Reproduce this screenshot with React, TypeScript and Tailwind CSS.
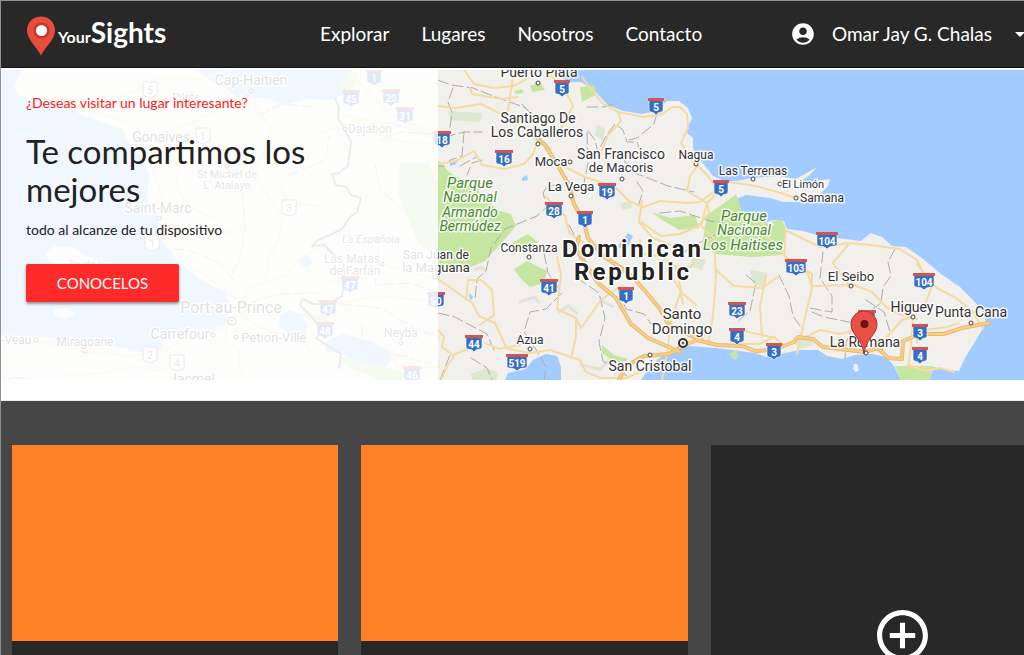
import React from "react";
import { MdAccountCircle, MdAddCircleOutline, MdArrowDropDown } from "react-icons/md";

type Label = [text: string, x: number, y: number, size: number, kind?: "park" | "soft"];

const labels: Label[] = [
  ["Cap-Haitien", 251, 85, 14],
  ["Pilate", 186, 101, 11, "soft"],
  ["Gonaives", 161, 142, 14],
  ["St Michel de", 227, 178, 11, "soft"],
  ["L' Atalaye", 227, 189, 11, "soft"],
  ["Saint-Marc", 158, 213, 14],
  ["Île de la", 88, 268, 11, "soft"],
  ["Port-au-Prince", 231, 313, 16],
  ["Carrefour", 180, 339, 14],
  ["Petion-Ville", 274, 342, 13],
  ["Miragoane", 85, 346, 12],
  ["n-Veau", 13, 344, 12],
  ["Jacmel", 192, 384, 14],
  ["Dajabon", 370, 133, 12, "soft"],
  ["La Española", 371, 243, 11, "soft"],
  ["Las Matas", 352, 263, 12, "soft"],
  ["de Farfán", 355, 275, 12, "soft"],
  ["San Juan de", 436, 259, 12],
  ["la Maguana", 436, 272, 13],
  ["Neyba", 401, 337, 12, "soft"],
  ["Puerto Plata", 539, 77, 14],
  ["Santiago De", 538, 123, 14],
  ["Los Caballeros", 537, 137, 14],
  ["Moca", 551, 166, 13],
  ["San Francisco", 621, 159, 14],
  ["de Macoris", 621, 172, 13],
  ["La Vega", 571, 191, 13],
  ["Nagua", 696, 159, 12],
  ["Las Terrenas", 753, 175, 12],
  ["El Limón", 803, 188, 11],
  ["Samana", 822, 202, 12],
  ["Parque", 470, 188, 15, "park"],
  ["Nacional", 470, 202, 14, "park"],
  ["Armando", 470, 217, 14, "park"],
  ["Bermúdez", 470, 231, 14, "park"],
  ["Parque", 744, 221, 15, "park"],
  ["Nacional", 744, 235, 14, "park"],
  ["Los Haitises", 743, 250, 15, "park"],
  ["Constanza", 529, 252, 12],
  ["Azua", 530, 344, 12],
  ["Santo", 682, 319, 15],
  ["Domingo", 682, 334, 15],
  ["San Cristobal", 650, 371, 14],
  ["El Seibo", 851, 281, 13],
  ["Higuey", 912, 312, 14],
  ["Punta Cana", 971, 317, 14],
  ["La Romana", 865, 347, 14],
];

const shields: [string, number, number][] = [
  ["5", 562, 88], ["5", 656, 106], ["5", 721, 188], ["1", 374, 77], ["45", 351, 98], ["20", 391, 97],
  ["31", 405, 115], ["18", 442, 139], ["16", 504, 158], ["28", 554, 210], ["19", 607, 191], ["1", 585, 219],
  ["104", 827, 240], ["103", 796, 267], ["104", 924, 281], ["41", 549, 287], ["1", 626, 295], ["23", 737, 310],
  ["4", 737, 336], ["3", 774, 351], ["3", 920, 332], ["4", 920, 355], ["", 867, 318], ["44", 474, 343],
  ["519", 517, 362], ["50", 436, 300], ["47", 350, 284], ["47", 328, 308], ["48", 325, 330], ["46", 412, 374],
];

const plates: [string, number, number][] = [
  ["5", 150, 90], ["1", 203, 136], ["3", 289, 208], ["1", 152, 243], ["2", 150, 355], ["4", 177, 363], ["", 17, 386],
];

const towns: [number, number][] = [
  [251, 91], [159, 218], [213, 335], [236, 337], [85, 351], [36, 340], [345, 129], [382, 264], [435, 277],
  [401, 343], [538, 83], [538, 144], [570, 162], [622, 179], [571, 196], [696, 164], [753, 179], [780, 184],
  [796, 198], [529, 257], [530, 349], [650, 355], [851, 286], [913, 317], [971, 323], [866, 353], [227, 166],
];

const minorRoads = [
  "M438 106l18 2 25-4 18 9 20 8 18 17 14 11",
  "M464 70l10 14 20 4 20-2 14-8",
  "M470 88l2 6 30 5 16-2",
  "M438 164l18-3 18-10 8 14 22 4 20-5 9-10 4-12",
  "M514 70l-3 20-4 26M546 70l20 22 7 14-14 26",
  "M582 77l20 26 16 9 26 5 18-3 10-7 8 0 7 7 1 14-7 15 12 18 14 14 10 14",
  "M618 112l3 9-13 14-6 15M545 196l20 20 5 18 16 10",
  "M561 165l24 12 30 10 14 14 14 6 17-6 28 2 12-1 12-9 13-7",
  "M698 165l-8 11-3 15 20 12 14-14M642 200l-3 22 14 16 20 8",
  "M438 279l20 14 14 10 7 13 16 7 10 22 3 4 22 4 20-3 30 10 6 12 15 6 25 0 40-18",
  "M466 300l2-20 13 0 11 10 2 25-14 10",
  "M482 345l-14 4-13 5-8 13-6 13M485 343l14 6 21-4",
  "M438 330l6 7-2 10 12 9",
  "M557 257l4 17-4 35 19 9 5 10 20-28 20-14M576 320l0 17-5 21",
  "M641 222l20 14 19-2 18-8 11-12-2-12",
  "M640 240l3 14 17 2 15 10 16 1 8-14 5-9M675 267l7 26 14 12",
  "M707 203l-6 23 13 12 2 40-3 38-5 28M716 270l18 16 28 2 16-11",
  "M668 270l12 20 3 14M680 294l-10 28-2 27-6 31",
  "M762 212l1 20 22 24 23 18 4 14M786 230l-2 26 28 18 0 14-9 38-6 28",
  "M735 329l40 9 10 8M739 344l20 0 16-7M766 276l-6 30 2 31",
  "M812 286l42-1 18 7 14 15 13 7 18 5",
  "M785 230l35 17 30-4 20 2 30 4 17 11 7 14 13 14 19 10 17 14 10 17",
  "M848 245l-15 18 8 12 7 9M917 264l16 20-8 20-13 13M913 319l-2 25-3 24 15-2",
  "M800 340l20-10 20 4 20-5 12-14M870 350l16-12 16-18 12-3",
  "M917 343l0-12 30-4 12-4M908 365l18 6 14-3 14 4",
  "M729 182l27 4 25 7 15 5 20 2",
  "M20 74l26 26 44 9 40 16 18 28 16 50-4 27 16 29 32 18 32 25",
  "M90 109l44-17 24-14 43 1 30-9M165 133l30-12 39-19 14-12M166 152l13 14-3 22 15 20 30 14",
  "M250 92l9 22 13 12-8 28-14 18 16 20 16 26-3 22-10 18-4 20M278 183l10 20 32 3",
  "M150 253l-5-20 22-10 40 17 32-12M238 306l14-20 34-10 14-18 18-10",
  "M1 341l40 1 45 10 45 4 35-5 27-20 26-2 24-17 20-3M240 314l20 14 42 12 8 12",
  "M229 316l-4 26 14 8 0 20 8 10M175 365l-16 6-26-5-28 7-40 2",
  "M338 115l52 8 43 14 5 0M352 76l34 35 17 10 35 10M315 134l46-14 28 20 44 4",
  "M328 282l26-3 26-15 32 8 26 7M344 302l36-6 44 4M388 350l12 20 38-3",
];

const majorRoads = [
  "M537 138l8 7 10 16 14 24 5 19 10 18 4 16 15 18 25 16 18 20 14 17 8 15 21 11 12 4",
  "M579 237l-3 12 22 34 18 15 15 26 17 14 32 14",
  "M683 346l14-6 20 5 25 1 13 5 18-1 21-8 4-5 15 2 10 8 42 5 13-4 10 10 14 1 1-18 17-7 24 0 18-6 27-5",
  "M683 346l-14 8-25 2-18 10-7 14",
];

const borders = [
  "M438 80l13 5 22 3 28 11 23 8 7 6M522 104l14 16M453 88l-5 14 4 10-3 24 15-4 18 0",
  "M464 132l-2 24-12 4-5 6-7 0M482 160l-10 3-5 12M460 166l18-10",
  "M587 107l17 0 10-3M588 131l7 9 3 12 8-16 9-12 8 6 4 12 10 0 4 12M629 140l8-2 17-14 3-11",
  "M587 133l1 30-4 20M624 160l8 12 16 6 20 8 26 6M637 182l6 9-5 16",
  "M560 183l-14 5-3 5 4 14-10 9-32 13-14 19-5 23-9 8-2 20",
  "M569 225l8 15M544 253l4 20 14 20-16 16-16 3-6 20 11 16 11 19-2 14",
  "M581 248l-4 30 22 15 6 25-6 24 4 19 24 15M618 291l8 18 18 5 10 14",
  "M660 213l20-2 30 10 14 2M680 255l15-10 20-10M746 275l10 8-6 28-14 12",
  "M779 275l10 21 4 20 10 14M823 252l-3 26 12 18 0 16-12-2-10-2M895 249l-7 13 3 14-8 11-2 16-8 6",
  "M866 300l18 12 6 20-8 18M812 312l12 5 30 6-8 20-1 15",
  "M438 313l17 4 13 7 19 10 7 16M440 380l10-25M471 358l16 10 5 12",
  "M260 115l22-11 30 3M270 150l20 25 35-15 5-24M242 190l3 35-4 30-9 20M158 248l30 2 32 13 16 20",
  "M380 140l20-8 35 2M375 165l5 25 30 25M344 235l35 4-4 46 35-2 28 10",
  "M250 302l30-8 38-1M340 304l42 4 31 20 25 9M362 325l1 27 40 4 25 8",
];

function Shield({ n, x, y }: { n: string; x: number; y: number }) {
  const h = n.length === 3 ? 10 : n.length === 1 ? 7 : 8;
  return (
    <g transform={`translate(${x} ${y})`}>
      <path d={`M${-h} -6V4Q${-h} 6 ${2 - h} 6Q-2 6 0 9Q2 6 ${h - 2} 6Q${h} 6 ${h} 4V-6Z`} fill="#356fc4" stroke="#fff" strokeOpacity=".6" />
      <rect x={-h - 1} y="-8" width={2 * h + 2} height="3" fill="#cf5558" />
      {n && <text y="5" fontSize="10" fontWeight="700" textAnchor="middle" fill="#fff">{n}</text>}
    </g>
  );
}

function HispaniolaMap() {
  return (
    <svg viewBox="1 70 1023 310" preserveAspectRatio="xMidYMid slice" className="block h-[310px] w-full font-[Roboto,sans-serif]" role="img" aria-label="Mapa de República Dominicana">
      <rect x="0" y="70" width="1030" height="310" fill="#a2cbff" />
      <path
        fill="#f2f0ec"
        d="M22 70L14 85L18 96L60 103L78 113L100 122L122 129L131 146L142 158L150 176L147 198L158 215L160 238L178 260L198 278L225 293L231 307L226 323L207 331L182 331L166 336L160 350L140 352L106 344L80 342L50 337L1 335V380H505L508 373L526 369L533 360L546 354L557 356L561 367V380H641L647 371L658 359L672 351L690 346L716 348L732 350L755 353L766 357L781 354L799 350L818 350L827 356L842 359L855 355L872 354L886 357L894 366L901 380H929L934 367L946 370L959 371L965 358L976 340L986 323L984 314L975 302L960 287L941 274L922 258L906 247L892 246L882 237L871 233L861 241L837 238L820 236L803 231L787 229L784 221L773 220L763 224L746 219L740 212L736 199L746 195L770 198L783 202L800 202L814 200L828 186L830 179L823 180L811 187L799 182L809 176L817 167L805 174L796 179L779 176L752 178L736 181L724 181L713 176L706 167L698 158L693 148L693 138L687 133L688 127L692 118L688 108L679 101L667 101L655 111L642 114L623 111L608 105L602 99L594 90L581 82L568 82L557 74L548 70H352L345 94L330 100L306 99L285 105L268 98L239 98L224 87L210 80L197 70Z"
      />
      <path fill="#f2f0ec" d="M46 253l9-7 20 2 10 6 20 10 16 9-6 5-26-7-28-4-13-7ZM55 309l12-1 8 6-9 5-12-3ZM854 364l3 0 2 6-3 2-3-3Z" />
      <g fill="#a2cbff">
        <path d="M280 315l10-5 12 5 6 12-4 10-15-2-10-10ZM325 342l18-8 30 8 20 12-6 12-20 3-22-14-18-4ZM299 259l8-4 6 7-5 5-7-2ZM450 163l8-4-2 5-6 2ZM522 178l5-3 1 5-6 1ZM469 293l4 4-3 4ZM618 246l10-13 5 3-8 16Z" />
      </g>
      <g fill="#c5e6a0">
        <path d="M438 160l11 12 28 17 20 21 14 4 5 12-11 13-20 22-26 11-21-2ZM580 87l15-2 1 10-14 7ZM530 86l10-4 5 8-13 2ZM514 91l8-2 2 4-8 1ZM510 244l18-10 10 8-12 10-13-2ZM514 269l13-8 20 10-3 12-14 4-9-8ZM652 212l18 6 25-3 4 13-20 2-20-12ZM723 204l13-10 6 17 16 9 28 10-4 25-31 2-35-3-14-9 5-30ZM895 366h39l-5 14h-28ZM400 162l28 1 10 20v75l-20-15-20-50ZM336 88l14-16 8 2-6 16ZM300 313l25 2 12 14-18-3ZM334 355l38 9 40 11 13 5h-45l-30-12ZM602 345l12 10 14 4-8 6-18-12ZM729 354l8-4 1 8-4 2ZM772 221l10-1 4 8-8 5Z" />
      </g>
      <g fill="#dce8cf">
        <path d="M448 111l34 2-2 9-29-2ZM597 125l8 4-2 12-8-6ZM620 203l11-2 1 7-10 2ZM692 256l14 4-4 10-12-4ZM750 270l18 3-6 14-10-4ZM471 374l16-6 11 5-1 7h-25ZM793 337l16 0 5 8-16 4Z" />
      </g>
      <path d="M558 313l10-7 10 8M519 302l16-5 4 6M600 300l14 7M580 365l20 4 10-10M474 270l7-3 5 4" fill="none" stroke="#e4e1dc" strokeWidth="3" />
      <g fill="none" strokeLinejoin="round" strokeLinecap="round">
        <g stroke="#b0aca8" strokeWidth="1" strokeDasharray="11 4">
          {borders.map((d) => <path key={d} d={d} />)}
        </g>
        <g stroke="#f3dba3" strokeWidth="2">
          {minorRoads.map((d) => <path key={d} d={d} />)}
        </g>
        <g stroke="#e9b870" strokeWidth="4">
          {majorRoads.map((d) => <path key={d} d={d} />)}
        </g>
        <g stroke="#fbcf85" strokeWidth="2">
          {majorRoads.map((d) => <path key={d} d={d} />)}
        </g>
        <path
          d="M335 98l4 9-1 12 7 10 6 13-3 24-9 7-7 1 4 11 10 2 5 8 10 3-4 14-7 5-8 12-10 5-14 6-6 6 12-1 9 9 10 7 2 18-3 17-14 8-14 0-12-5-2 6 10 10 12 15-6 8 15 10 10 6-2 14"
          stroke="#858285"
          strokeWidth="2"
        />
      </g>
      <g fill="#fff" stroke="#444" strokeWidth="1">
        {towns.map(([x, y]) => <circle key={`${x}-${y}`} cx={x} cy={y} r="2" />)}
      </g>
      {plates.map(([n, x, y]) => (
        <g key={`${n}-${x}`} transform={`translate(${x} ${y})`}>
          <path d="M-7 -8H7V5L0 8L-7 5Z" fill="#fff" stroke="#777" />
          {n && <text y="4" fontSize="10" textAnchor="middle" fill="#555">{n}</text>}
        </g>
      ))}
      {shields.map(([n, x, y]) => <Shield key={`${n}-${x}-${y}`} n={n} x={x} y={y} />)}
      <g textAnchor="middle" stroke="#fff" strokeWidth="3" strokeLinejoin="round" paintOrder="stroke">
        {labels.map(([text, x, y, size, kind]) => (
          <text
            key={`${text}-${x}-${y}`}
            x={x}
            y={y}
            fontSize={size}
            fill={kind === "park" ? "#46882c" : kind === "soft" ? "#555" : "#333"}
            fontStyle={kind === "park" || text === "La Española" ? "italic" : "normal"}
            strokeOpacity={0.85}
          >
            {text}
          </text>
        ))}
        <g fontSize="24" fontWeight="700" fill="#222" className="tracking-[3px]">
          <text x="633" y="257">Dominican</text>
          <text x="633" y="280">Republic</text>
        </g>
      </g>
      <g fill="#fff" stroke="#333">
        <circle cx="683" cy="343" r="4" strokeWidth="2" />
        <circle cx="683" cy="343" r="1" />
        <circle cx="232" cy="321" r="4" />
        <circle cx="232" cy="321" r="1" />
      </g>
      <path d="M864 354C862 338 851 335 851 324A13 13 0 0 1 877 324C877 335 866 338 864 354Z" fill="#ea4f46" stroke="#ad3530" />
      <circle cx="864.5" cy="324" r="4" fill="#651512" />
    </svg>
  );
}

const links = ["Explorar", "Lugares", "Nosotros", "Contacto"];

export default function App() {
  return (
    <div className="h-screen overflow-hidden border-l border-t border-[#929292] bg-white font-[Lato,sans-serif] text-[#212121]">
      <header className="flex h-[67px] items-center overflow-hidden border-b border-[#111] bg-[#282828] pl-[26px] text-white">
        <a href="#" className="flex w-[293px] shrink-0 items-center gap-[3px]" aria-label="YourSights">
          <svg viewBox="0 0 28 40" className="mt-1 h-10 w-7">
            <path d="M14 .5C6 .5 0 6.500 0 14.500C0 23 9 30 14 39.500C19 30 28 23 28 14.500C28 6.500 22 .5 14 .5Z" fill="#e84c3d" />
            <circle cx="14.500" cy="14.500" r="8" fill="#c0392b" />
            <circle cx="14.500" cy="14.500" r="5.500" fill="#fff" />
          </svg>
          <span className="flex items-baseline pb-1 leading-8">
            <span className="text-base font-bold">Your</span>
            <span className="text-[28px] font-bold">Sights</span>
          </span>
        </a>
        <nav className="flex shrink-0 gap-8 text-[19px]">
          {links.map((l) => <a key={l} href="#">{l}</a>)}
        </nav>
        <button type="button" className="-mr-2 ml-auto flex shrink-0 items-center text-[19px]">
          <MdAccountCircle className="mr-4 size-[26px]" />
          Omar Jay G. Chalas
          <MdArrowDropDown className="ml-4 size-6" />
        </button>
      </header>

      <section className="mt-[2px] grid">
        <div className="col-start-1 row-start-1">
          <HispaniolaMap />
        </div>
        <div className="z-10 col-start-1 row-start-1 w-[437px] bg-white/85 px-[25px] pt-[23px]">
          <p className="text-[14px] leading-5 text-[#ff1c20]">¿Deseas visitar un lugar interesante?</p>
          <h1 className="mt-[19px] w-80 text-[33px] leading-[38px]">Te compartimos los mejores</h1>
          <p className="mt-3 text-[14px] leading-5">todo al alcanze de tu dispositivo</p>
          <button type="button" className="mt-6 h-[38px] w-[153px] rounded-[2px] bg-[#ff2a2a] text-[15px] text-white shadow-[0_2px_3px_rgba(0,0,0,0.4)]">CONOCELOS</button>
        </div>
      </section>

      <main className="mt-[20px] border-t border-[#eee] bg-[#464646]">
        <div className="grid grid-cols-[32.25%_32.25%_383px] gap-[23px] pb-8 pl-[11px] pt-11">
          <article className="h-[381px] bg-[#282828]"><div className="h-[196px] bg-[#ff8127]" /></article>
          <article className="h-[381px] bg-[#282828]"><div className="h-[196px] bg-[#ff8127]" /></article>
          <button type="button" aria-label="Agregar lugar" className="flex h-[381px] items-center justify-center bg-[#282828] text-white">
            <MdAddCircleOutline className="size-[61px]" />
          </button>
        </div>
      </main>
    </div>
  );
}
